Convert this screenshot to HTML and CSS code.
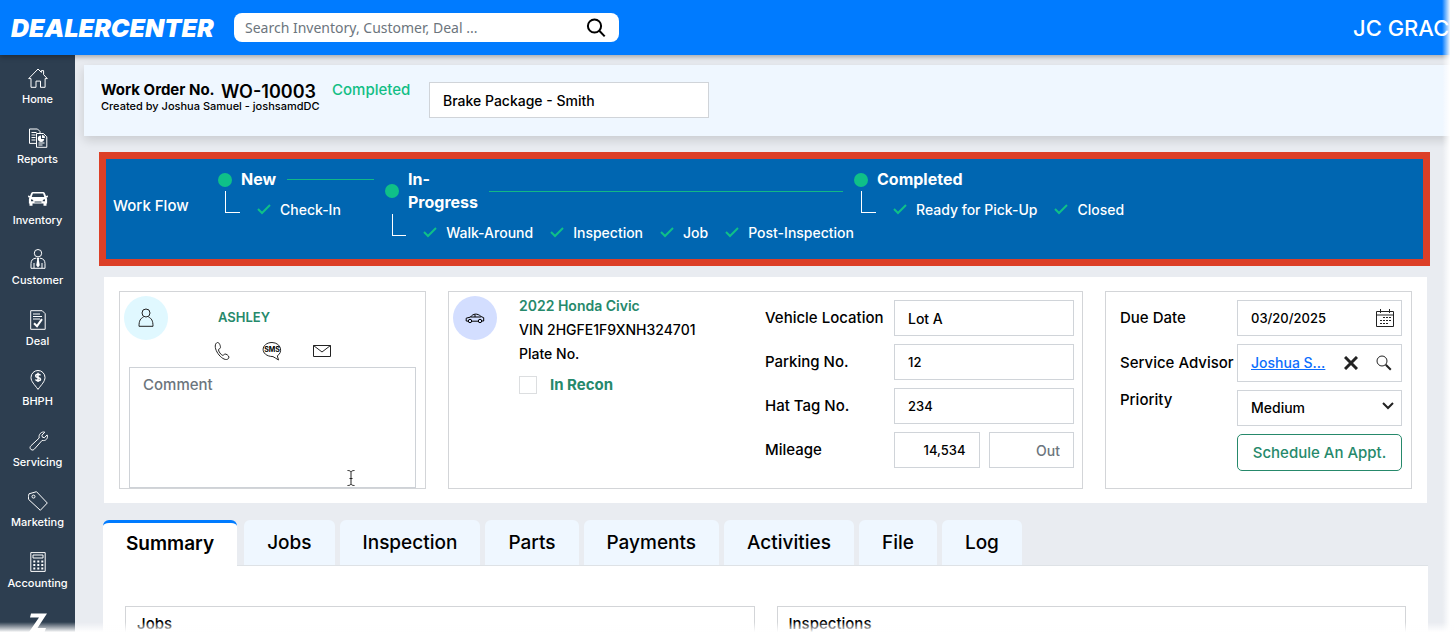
FILE: index.html
```html
<!DOCTYPE html>
<html lang="en">
<head>
    <meta charset="UTF-8">
    <meta name="viewport" content="width=device-width, initial-scale=1.0">
    <title>DealerCenter - Work Order WO-10003</title>
    <link rel="stylesheet" href="styles.css">
</head>
<body>

    <header class="topbar">
        <a class="logo" href="#">DEALERCENTER</a>
        <form class="search">
            <input type="text" placeholder="Search Inventory, Customer, Deal ..." aria-label="Search">
            <button type="button" aria-label="Search">
                <svg width="20" height="20" viewBox="0 0 20 20"><circle cx="8.500" cy="8" r="6.600"/><path d="M13.300 12.800l5.400 5.600"/></svg>
            </button>
        </form>
        <span class="user">JC GRAC</span>
    </header>

    <div class="layout">
        <!-- Side menu -->
        <nav class="sidebar">
            <a href="#">
                <svg viewBox="0 0 20 20"><path d="M.7 10.6L10 1l3.400 3.400V2.600h2.200v4l3.700 4h-2.200v8.700h-4.600v-6.200H8v6.200H3v-8.700z"/></svg>
                Home
            </a>
            <a href="#">
                <svg viewBox="0 0 20 20"><path d="M8 15.400H1.500V1h8l2.500 2.500V5M3.500 4.500h5M3.500 7h4M3.500 9.500h4M3.500 12h4M8.500 5.500h7l3.300 3.300v10.500H8.500zM10.500 15h6M10.500 17h4"/><path class="fill" d="M13 7.500v3.500h3.200a3.200 3.200 0 1 1-3.200-3.500zM14 7v3h3a3 3 0 0 0-3-3z"/></svg>
                Reports
            </a>
            <a href="#">
                <svg viewBox="0 0 20 20"><path class="fill" fill-rule="evenodd" d="M4.500 3h11l1.200.8L18 7l1.900-.6v1.800l-1.400.4.6 1.400v4.500h-.6v2.300h-3v-2.300h-11v2.300h-3v-2.300H.9V10l.6-1.400L.1 8.200V6.400L2 7l1.300-3.200zM4.900 4.500L3.700 8h12.600l-1.200-3.500zM3 10.200v2h2.600l-.8-1.400zM17 10.200v2h-2.600l.8-1.400zM6.500 12.500v1h7v-1z"/></svg>
                Inventory
            </a>
            <a href="#">
                <svg viewBox="0 0 20 20"><circle cx="10" cy="4.200" r="3.700"/><path d="M8 9.200c-3.500.4-4.800 2-5 5.300v4.800h14v-4.800c-.2-3.300-1.500-4.900-5-5.300M6 14v5M14 14v5"/><path class="fill" d="M8.500 8.700h3l-.7 2 1 5.500-1.800 2.300-1.800-2.300 1-5.500z"/></svg>
                Customer
            </a>
            <a href="#">
                <svg viewBox="0 0 20 20"><path d="M2.700.7h11.500l3 3v15.600H2.700zM5 4h7M5 6.500h9M5 9h7"/><path class="thick" d="M6 13.200l3 3 5-7"/></svg>
                Deal
            </a>
            <a href="#">
                <svg viewBox="0 0 20 20"><path d="M10 19.400C6.500 14.500 3 11.500 3 7.500a7 7 0 0 1 14 0c0 4-3.500 7-7 11.900z"/><path class="mid" d="M12.400 5.400c-.4-1.500-4.700-1.500-4.700.5 0 2.200 4.800 1 4.800 3.300 0 2-4.500 2-4.900.2M10 2.800v9.300"/></svg>
                BHPH
            </a>
            <a href="#">
                <svg viewBox="0 0 20 20"><path d="M16.800 1.200l-2.900 3 .5 2 2 .5 2.700-2.800c1.400 3.300-1.400 6.500-5 5.500l-7.900 8.900c-2.200 2.300-5.700-1.100-3.400-3.400l8.400-7.900C10.300 3.500 13.500.1 16.800 1.200z"/></svg>
                Servicing
            </a>
            <a href="#">
                <svg viewBox="0 0 20 20"><path d="M1 2.800L8.500.7 19.300 12l-7 7.300L.7 8.500C.2 6.500.4 4.600 1 2.800z"/><circle cx="5.500" cy="5.600" r="1.500"/></svg>
                Marketing
            </a>
            <a href="#">
                <svg viewBox="0 0 20 20"><path d="M2.800.6h14.400v18.800H2.800zM5 3h10v3H5z"/><path class="dots" d="M5.300 9.500h10M5.300 13h10M5.300 16.500h10"/></svg>
                Accounting
            </a>
            <a href="#" aria-label="Z">
                <svg viewBox="0 0 20 20"><path class="fill" d="M3 1.500h16L9.500 16H18l-1.500 4H1L11 5.500H2z"/></svg>
            </a>
        </nav>

        <main class="main">
            <!-- Work order header -->
            <section class="order-bar">
                <div class="order-info">
                    <div class="order-line">
                        <strong>Work Order No.</strong>
                        <span class="order-no">WO-10003</span>
                        <span class="status">Completed</span>
                    </div>
                    <div class="created">Created by Joshua Samuel - joshsamdDC</div>
                </div>
                <input class="field order-name" type="text" value="Brake Package - Smith" aria-label="Work order name">
            </section>

            <!-- Work flow -->
            <section class="workflow">
                <div class="workflow-title">Work Flow</div>
                <div class="stage">
                    <div class="stage-head"><i class="dot"></i><span>New</span><i class="line"></i></div>
                    <div class="steps">
                        <i class="elbow"></i>
                        <span class="step"><svg viewBox="0 0 14 12"><path d="M1 5l4 4 8-8"/></svg>Check-In</span>
                    </div>
                </div>
                <div class="stage">
                    <div class="stage-head"><i class="dot"></i><span>In-<br>Progress</span><i class="line"></i></div>
                    <div class="steps">
                        <i class="elbow"></i>
                        <span class="step"><svg viewBox="0 0 14 12"><path d="M1 5l4 4 8-8"/></svg>Walk-Around</span>
                        <span class="step"><svg viewBox="0 0 14 12"><path d="M1 5l4 4 8-8"/></svg>Inspection</span>
                        <span class="step"><svg viewBox="0 0 14 12"><path d="M1 5l4 4 8-8"/></svg>Job</span>
                        <span class="step"><svg viewBox="0 0 14 12"><path d="M1 5l4 4 8-8"/></svg>Post-Inspection</span>
                    </div>
                </div>
                <div class="stage">
                    <div class="stage-head"><i class="dot"></i><span>Completed</span></div>
                    <div class="steps">
                        <i class="elbow"></i>
                        <span class="step"><svg viewBox="0 0 14 12"><path d="M1 5l4 4 8-8"/></svg>Ready for Pick-Up</span>
                        <span class="step"><svg viewBox="0 0 14 12"><path d="M1 5l4 4 8-8"/></svg>Closed</span>
                    </div>
                </div>
            </section>

            <section class="cards">
                <!-- Customer -->
                <div class="card customer">
                    <div class="customer-top">
                        <span class="avatar">
                            <svg width="16" height="20" viewBox="0 0 16 20"><circle cx="8" cy="5" r="4"/><path d="M5.500 9C2.500 10.500 1 12.500 1 18.300h14C15 12.500 13.500 10.500 10.500 9"/></svg>
                        </span>
                        <div>
                            <a class="customer-name" href="#">ASHLEY</a>
                            <div class="contact">
                                <button type="button" aria-label="Call">
                                    <svg width="20" height="20" viewBox="0 0 20 20"><path d="M5.500 1.500c-3 .8-2.800 5.500-.5 9.500 2.300 4.200 6.500 7.800 9.500 7.500 1.500-.2 2.500-1.200 2.400-2.500-.1-1.400-2.900-3.300-4-3-1 .2-1.200 1.500-2.100 1.400C9 14.200 6.200 10 6.500 8.600c.1-.8 1.600-.7 1.900-1.700C8.800 5.500 7.400 1.200 5.500 1.500z"/></svg>
                                </button>
                                <button type="button" aria-label="Send SMS">
                                    <svg width="20" height="20" viewBox="0 0 20 20"><path d="M16.500 19l-1.200-4.200c5.600-3 4.300-13-5.300-13.300-11.500.1-12.500 13.700 1 14.100 1.800.8 3.300 2.200 5.500 3.400z"/><text x="10" y="11" text-anchor="middle">SMS</text></svg>
                                </button>
                                <button type="button" aria-label="Send email">
                                    <svg width="20" height="20" viewBox="0 0 20 20"><path d="M1.500 4.500h17v11h-17zM1.500 4.500L10 11l8.500-6.500"/></svg>
                                </button>
                            </div>
                        </div>
                    </div>
                    <textarea placeholder="Comment" aria-label="Comment"></textarea>
                    <svg class="cursor" width="8" height="16" viewBox="0 0 8 16"><path d="M.5.500c2 0 3 .5 3.500 1.500.5-1 1.500-1.500 3.500-1.500M4 2v12M.5 15.500c2 0 3-.5 3.500-1.500.5 1 1.500 1.500 3.500 1.500M2.500 8.500h3"/></svg>
                </div>

                <!-- Vehicle -->
                <div class="card vehicle">
                    <span class="avatar avatar-car">
                        <svg width="20" height="12" viewBox="0 0 20 12"><path d="M3.200 9.200L1.200 9V6.200l4.200-1.100C8 1.500 12.500 1 16 4.500l2.700 1.200V9h-2M7 9.200h6M5.500 5h10.300M10 2.500V5"/><circle cx="5" cy="9" r="1.700"/><circle cx="15" cy="9" r="1.700"/></svg>
                    </span>
                    <div class="vehicle-info">
                        <a href="#">2022 Honda Civic</a>
                        <span>VIN 2HGFE1F9XNH324701</span>
                        <span>Plate No.</span>
                        <label class="recon"><input type="checkbox"> In Recon</label>
                    </div>
                    <div class="vehicle-form">
                        <label for="location">Vehicle Location</label>
                        <input class="field" id="location" type="text" value="Lot A">
                        <label for="parking">Parking No.</label>
                        <input class="field number" id="parking" type="text" value="12">
                        <label for="hatTag">Hat Tag No.</label>
                        <input class="field number" id="hatTag" type="text" value="234">
                        <label for="mileage">Mileage</label>
                        <div class="mileage">
                            <input class="field number" id="mileage" type="text" value="14,534">
                            <input class="field" type="text" placeholder="Out" aria-label="Mileage out">
                        </div>
                    </div>
                </div>

                <!-- Schedule -->
                <div class="card schedule">
                    <label for="dueDate">Due Date</label>
                    <div class="field group number">
                        <input id="dueDate" type="text" value="03/20/2025">
                        <button type="button" aria-label="Open calendar">
                            <svg width="18" height="18" viewBox="0 0 18 18"><path d="M.5 2.500h17v15H.5zM.5 6h17M4.500 0v4M13.500 0v4"/><path class="days" d="M7 8.500h8M4 11.500h11M4 14.500h8"/></svg>
                        </button>
                    </div>
                    <span>Service Advisor</span>
                    <div class="field group advisor">
                        <a href="#">Joshua S...</a>
                        <button type="button" aria-label="Clear">
                            <svg class="clear" width="14" height="14" viewBox="0 0 14 14"><path d="M1 1l12 12M13 1L1 13"/></svg>
                        </button>
                        <button type="button" aria-label="Find advisor">
                            <svg width="16" height="16" viewBox="0 0 16 16"><circle cx="6" cy="6" r="5"/><path class="handle" d="M9.800 9.800l5 5"/></svg>
                        </button>
                    </div>
                    <label class="priority-label" for="priority">Priority</label>
                    <div class="select">
                        <select class="field" id="priority">
                            <option>Low</option>
                            <option selected>Medium</option>
                            <option>High</option>
                        </select>
                        <svg width="12" height="8" viewBox="0 0 12 8"><path d="M1 1l5 5 5-5"/></svg>
                    </div>
                    <button class="schedule-btn" type="button">Schedule An Appt.</button>
                </div>
            </section>

            <!-- Tabs -->
            <nav class="tabs">
                <button class="active" type="button">Summary</button>
                <button type="button">Jobs</button>
                <button type="button">Inspection</button>
                <button type="button">Parts</button>
                <button type="button">Payments</button>
                <button type="button">Activities</button>
                <button type="button">File</button>
                <button type="button">Log</button>
            </nav>
            <section class="tab-content">
                <div class="box">Jobs</div>
                <div class="box">Inspections</div>
            </section>
        </main>
    </div>

    <div class="fade-right"></div>
    <div class="fade-bottom"></div>

</body>
</html>
```

FILE: styles.css
```css
* {
    box-sizing: border-box;
}
body {
    margin: 0;
    height: 100vh;
    overflow: hidden;
    display: flex;
    flex-direction: column;
    background-color: #e9ecf1;
    color: #000;
    font-family: Inter, "Open Sans", sans-serif;
    font-size: 14px;
    font-weight: 500;
    line-height: 20px;
}
a {
    text-decoration: none;
}
button, input, select, textarea {
    font: inherit;
    color: inherit;
}
button {
    padding: 0;
    border: none;
    background: none;
    cursor: pointer;
}
svg {
    display: block;
    fill: none;
    stroke: #222;
}

/* Top bar */
.topbar {
    position: relative;
    z-index: 1;
    flex: none;
    display: flex;
    align-items: center;
    height: 55px;
    padding-left: 11px;
    background-color: #007bff;
    box-shadow: 0 2px 5px rgba(0, 0, 0, 0.3);
}
.logo {
    width: 223px;
    color: #fff;
    font-size: 25px;
    font-weight: 900;
    font-style: italic;
}
.search {
    display: flex;
    align-items: center;
    width: 385px;
    height: 29px;
    padding: 0 13px 0 11px;
    background-color: #fff;
    border-radius: 8px;
}
.search input {
    flex: 1;
    padding: 0;
    border: none;
    outline: none;
    background: none;
    font-family: "Noto Sans", sans-serif;
    font-size: 14px;
    font-weight: 400;
}
.search input::placeholder {
    color: #6c757d;
}
.search svg {
    stroke: #000;
    stroke-width: 2;
}
.user {
    width: 101px;
    margin-left: auto;
    overflow: hidden;
    white-space: nowrap;
    color: #fff;
    font-size: 22px;
    line-height: 28px;
}

/* Side menu */
.layout {
    flex: 1;
    display: flex;
    min-height: 0;
}
.sidebar {
    flex: none;
    width: 75px;
    padding-top: 13px;
    overflow: hidden;
    background-color: #2d3e50;
}
.sidebar a {
    display: flex;
    flex-direction: column;
    align-items: center;
    height: 60px;
    color: #fff;
    font-size: 11px;
    line-height: 22px;
}
.sidebar a:nth-child(even) {
    height: 61px;
}
.sidebar svg {
    width: 20px;
    height: 20px;
    stroke: #fff;
    stroke-width: 1;
}
.sidebar .fill {
    fill: #fff;
    stroke: none;
}
.sidebar .thick {
    stroke-width: 2;
}
.sidebar .mid {
    stroke-width: 1.500;
}
.sidebar .dots {
    stroke-width: 2;
    stroke-dasharray: 2 2;
}

.main {
    flex: 1;
    min-width: 0;
    padding: 10px 0 0 9px;
}

/* Work order header */
.order-bar {
    display: flex;
    align-items: flex-start;
    height: 71px;
    padding: 15px 17px;
    background-color: #eff7ff;
    box-shadow: 0 4px 10px rgba(0, 0, 0, 0.14);
}
.order-info {
    width: 328px;
}
.order-line {
    display: flex;
    height: 20px;
    white-space: nowrap;
    font-size: 15px;
}
.order-line strong {
    width: 120px;
    font-weight: 700;
}
.order-no {
    width: 111px;
    font-size: 18px;
    font-weight: 600;
    line-height: 24px;
}
.status {
    color: #12be85;
}
.created {
    font-size: 11px;
    line-height: 12px;
}
.field {
    width: 100%;
    min-width: 0;
    height: 36px;
    padding: 0 13px;
    border: 1px solid #d0d4d9;
    border-radius: 0;
    background-color: #fff;
    font-size: 14px;
}
.number {
    font-size: 13px;
}
.order-name {
    width: 280px;
    margin-top: 2px;
}

/* Work flow */
.workflow {
    display: grid;
    grid-template-columns: 105px 167px 469px 1fr;
    margin: 16px 24px 0 15px;
    padding: 9px 7px 15px;
    border: 7px solid #dc3f27;
    background-color: #0066b1;
    color: #fff;
    white-space: nowrap;
}
.workflow-title {
    margin-top: 28px;
    font-size: 15px;
}
.stage-head {
    display: flex;
    align-items: center;
    padding-right: 11px;
    font-size: 16px;
    font-weight: 700;
    line-height: 23px;
}
.dot {
    width: 14px;
    height: 14px;
    margin-right: 9px;
    border-radius: 50%;
    background-color: #0fc088;
}
.line {
    flex: 1;
    height: 1px;
    margin-left: 11px;
    background-color: #12b886;
}
.steps {
    display: flex;
    gap: 17px;
}
.elbow {
    width: 15px;
    height: 22px;
    margin-left: 7px;
    border-left: 1px solid #fff;
    border-bottom: 1px solid #fff;
}
.step {
    display: flex;
    align-items: center;
    gap: 9px;
    margin-top: 8px;
    font-size: 14px;
    line-height: 22px;
}
.step svg {
    width: 14px;
    height: 12px;
    stroke: #0fc088;
    stroke-width: 2;
}

/* Cards */
.cards {
    display: grid;
    grid-template-columns: 307fr 635fr 307fr;
    gap: 22px;
    margin: 11px 27px 0 20px;
    padding: 14px 15px;
    background-color: #fff;
}
.card {
    position: relative;
    height: 198px;
    border: 1px solid #d3d5d8;
}
.avatar {
    flex: none;
    display: flex;
    align-items: center;
    justify-content: center;
    width: 44px;
    height: 44px;
    border-radius: 50%;
    background-color: #e0f8ff;
}
.avatar-car {
    background-color: #d3deff;
}
.avatar-car svg {
    stroke: #000;
}
.customer {
    display: flex;
    flex-direction: column;
    padding: 4px 9px 0;
}
.customer-top {
    display: flex;
    gap: 44px;
    height: 71px;
    margin-left: -5px;
}
.customer-name {
    display: block;
    padding: 11px 0 0 6px;
    color: #26896b;
    font-size: 13px;
    font-weight: 600;
}
.contact {
    display: flex;
    gap: 30px;
    margin-top: 14px;
}
.contact text {
    fill: #000;
    stroke: none;
    font-size: 7px;
    font-weight: 700;
}
.customer textarea {
    flex: 1;
    padding: 7px 13px;
    border: 1px solid #ced2d7;
    font-size: 15px;
    resize: none;
}
.customer textarea::placeholder, .mileage input::placeholder {
    color: #6c757d;
}
.cursor {
    position: absolute;
    right: 70px;
    bottom: 2px;
}
.vehicle {
    display: flex;
    padding: 4px 8px 0 4px;
}
.vehicle-info {
    display: flex;
    flex-direction: column;
    gap: 4px;
    margin-left: 22px;
    white-space: nowrap;
}
.vehicle-info a {
    color: #26896b;
    font-weight: 600;
}
.recon {
    display: flex;
    align-items: center;
    gap: 13px;
    margin-top: 7px;
    color: #26896b;
    font-size: 15px;
    font-weight: 700;
}
.recon input {
    appearance: none;
    width: 18px;
    height: 18px;
    margin: 0;
    border: 1px solid #dcdee0;
}
.vehicle-form {
    display: grid;
    grid-template-columns: 129px 180px;
    grid-auto-rows: 36px;
    align-items: center;
    gap: 8px 0;
    margin: 4px 0 0 auto;
}
.vehicle-form label, .schedule label, .schedule span {
    font-size: 15px;
    line-height: 20px;
}
.mileage {
    display: flex;
    gap: 9px;
}
.mileage input {
    text-align: right;
}
.schedule {
    display: grid;
    grid-template-columns: 1fr 165px;
    grid-template-rows: 36px 38px 36px 37px;
    align-items: center;
    gap: 8px 0;
    padding: 8px 9px 0 14px;
    white-space: nowrap;
}
.group {
    display: flex;
    align-items: center;
    justify-content: space-between;
    height: 100%;
    padding: 0 7px 0 13px;
}
.group input {
    width: 100px;
    padding: 0;
    border: none;
    outline: none;
}
.group .days {
    stroke-dasharray: 2 1;
}
.group.number {
    font-size: 13px;
}
.advisor {
    padding-right: 9px;
}
.advisor a {
    width: 74px;
    color: #0d6efd;
    text-decoration: underline;
}
.clear {
    stroke-width: 3;
}
.handle {
    stroke-width: 2;
}
.priority-label {
    align-self: start;
}
.select {
    position: relative;
}
.select select {
    appearance: none;
}
.select svg {
    position: absolute;
    right: 8px;
    top: 12px;
    stroke-width: 2;
    pointer-events: none;
}
.schedule-btn {
    grid-column: 2;
    height: 37px;
    border: 1px solid #26896b;
    border-radius: 5px;
    color: #26896b;
    font-size: 15px;
}

/* Tabs */
.tabs {
    display: flex;
    gap: 5px;
    margin: 17px 0 0 19px;
}
.tabs button {
    height: 45px;
    padding: 0 23px;
    border-radius: 6px 6px 0 0;
    background-color: #eff7ff;
    font-size: 19px;
}
.tabs .active {
    position: relative;
    height: 46px;
    margin: 0 2px -1px 0;
    padding-bottom: 2px;
    border-top: 3px solid #007bff;
    background-color: #fff;
    font-weight: 600;
}
.tab-content {
    display: grid;
    grid-template-columns: 1fr 1fr;
    gap: 22px;
    margin: 0 26px 0 19px;
    padding: 40px 22px;
    border-top: 1px solid #dee2e6;
    background-color: #fff;
}
.box {
    height: 100px;
    padding: 7px 11px;
    border: 1px solid #d3d5d8;
    font-size: 15px;
}

/* Soft page edges */
.fade-right, .fade-bottom {
    position: fixed;
    right: 0;
    bottom: 0;
    z-index: 2;
    pointer-events: none;
}
.fade-right {
    top: 0;
    width: 12px;
    background: linear-gradient(to right, transparent, #fff 70%);
}
.fade-bottom {
    left: 0;
    height: 12px;
    background: linear-gradient(to bottom, transparent, #fff 85%);
}
```
